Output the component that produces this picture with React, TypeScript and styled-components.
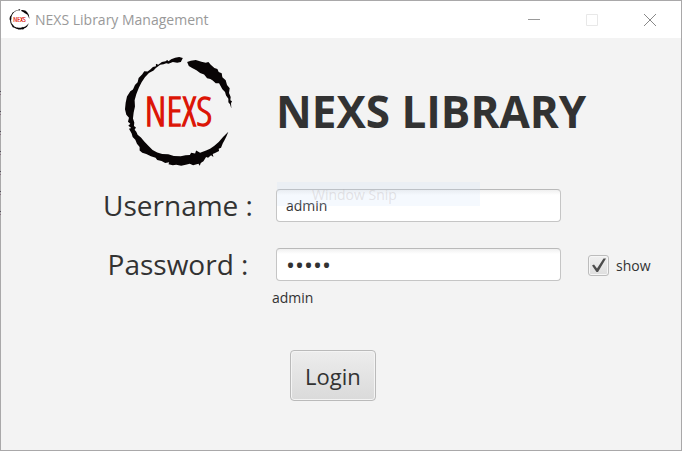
import React, { useState } from "react";
import styled, { createGlobalStyle } from "styled-components";

const GlobalStyle = createGlobalStyle`
  * { box-sizing: border-box; }
  body {
    margin: 0;
    background: #f3f3f3;
    color: #323232;
    font-family: "Open Sans", "Noto Sans", sans-serif;
  }
`;

const Window = styled.div`
  position: relative;
  display: flex;
  flex-direction: column;
  min-height: 100vh;
  border: 1px solid #a9a8a9;
  background: #f3f3f3;
`;

const DesktopEdge = styled.div`
  position: absolute;
  top: 88px;
  left: -1px;
  width: 1px;
  height: 130px;
  background: repeating-linear-gradient(
    #a9a8a9 0 2px,
    #55505c 2px 3px,
    #a9a8a9 3px 5px,
    #86717f 5px 6px,
    #a9a8a9 6px 20px
  );
`;

const TitleBar = styled.header`
  display: flex;
  align-items: center;
  height: 37px;
  padding-left: 8px;
  background: #fff;
`;

const WindowTitle = styled.span`
  flex: 1;
  margin-left: 5px;
  color: #999;
  font-size: 14px;
  line-height: 20px;
`;

const WindowButton = styled.button`
  display: flex;
  align-items: center;
  justify-content: center;
  width: 58px;
  height: 37px;
  padding: 0;
  border: 0;
  background: none;
  &:last-child { margin-right: 2px; }
`;

const Form = styled.form`
  display: grid;
  grid-template-columns: 196px minmax(0, 1fr) 90px;
  grid-template-rows: 146px 59px 102px auto;
  align-items: start;
  padding: 5px 30px 40px 79px;
`;

const LogoCell = styled.div`
  display: flex;
  justify-content: center;
  padding-top: 12px;
`;

const Heading = styled.h1`
  grid-column: 2 / 4;
  margin: 0;
  padding-top: 38px;
  font-size: 44px;
  line-height: 60px;
  font-weight: 700;
  white-space: nowrap;
`;

const FieldLabel = styled.label`
  font-size: 28px;
  line-height: 33px;
  text-align: center;
  white-space: nowrap;
`;

const FieldCell = styled.div`
  position: relative;
`;

const TextField = styled.input`
  display: block;
  width: 100%;
  height: 33px;
  padding: 0 9px;
  border: 1px solid #c5c5c5;
  border-top-color: #b9b9b9;
  border-radius: 4px;
  outline: 0;
  background: linear-gradient(#f0f0f0, #fff 5px);
  color: #323232;
  font-family: inherit;
  font-size: 14px;
  &[type="password"] {
    font-size: 24px;
  }
`;

const SnipGhost = styled.div`
  position: absolute;
  top: -7px;
  left: 1px;
  width: 203px;
  height: 24px;
  padding-left: 35px;
  background: rgba(205, 227, 250, 0.2);
  color: rgba(180, 170, 170, 0.3);
  font-size: 14px;
  line-height: 26px;
  pointer-events: none;
`;

const PlainPassword = styled.output`
  display: block;
  height: 20px;
  margin: 7px 0 0 -4px;
  font-size: 14px;
  line-height: 20px;
`;

const ShowLabel = styled.label`
  display: flex;
  align-items: center;
  height: 35px;
  gap: 7px;
  padding-left: 27px;
  font-size: 14px;
`;

const CheckFrame = styled.span`
  display: grid;
  width: 21px;
  height: 21px;
  > * { grid-area: 1 / 1; }
  svg { pointer-events: none; }
`;

const CheckInput = styled.input`
  appearance: none;
  width: 21px;
  height: 21px;
  margin: 0;
  border: 1px solid #bcbcbc;
  border-radius: 3px;
  background: linear-gradient(#f0f0f0, #dedede);
  box-shadow: inset 0 0 0 1px #f6f6f6;
`;

const LoginButton = styled.button`
  grid-column: 2;
  justify-self: start;
  height: 51px;
  margin-left: 14px;
  padding: 0 14px;
  border: 1px solid #bababa;
  border-radius: 4px;
  background: linear-gradient(#ededed, #dadada);
  box-shadow: inset 0 0 0 1px #f4f4f4;
  color: #323232;
  font-family: inherit;
  font-size: 22px;
  line-height: 30px;
`;

const FormRow = styled.div`
  display: contents;
`;

const LogoText = styled.text`
  fill: #dc1405;
  stroke: #dc1405;
  stroke-width: 4px;
  font-family: "Open Sans Condensed Light", "Open Sans Condensed", "Liberation Sans Narrow", sans-serif;
  font-weight: 300;
  font-size: 122px;
`;

function Logo({ size }: { size: number }) {
  return (
    <svg width={size} height={size} viewBox="18 22 340 340" role="img" aria-label="NEXS">
      <g fill="#080405">
        <path d="M201 31 L195 43 L184 45 L171 43 L158 48 L151 47 L143 50 L133 51 L120 61 L113 69 L99 76 L87 89 L77 104 L69 120 L61 140 L56 158 L57 177 L53 196 L51 213 L55 225 L54 236 L60 240 L56 247 L61 253 L65 262 L75 270 L85 282 L98 296 L110 308 L124 315 L139 320 L157 321 L174 326 L195 327 L209 324 L222 323 L226 316 L238 318 L241 309 L253 316 L271 309 L283 304 L296 295 L309 284 L322 269 L338 253 L332 267 L326 279 L321 288 L316 301 L309 304 L310 311 L298 317 L291 320 L293 329 L286 324 L277 331 L271 329 L263 342 L255 347 L252 355 L248 349 L232 354 L222 349 L210 352 L196 355 L181 352 L171 354 L158 351 L160 345 L148 347 L137 341 L124 338 L119 331 L105 327 L91 320 L79 316 L71 309 L71 299 L63 289 L58 277 L50 269 L47 258 L39 244 L46 242 L37 235 L43 229 L36 223 L39 211 L31 202 L27 185 L29 166 L33 147 L43 131 L51 126 L57 112 L65 104 L68 91 L79 80 L85 71 L95 72 L104 65 L111 58 L120 56 L120 48 L127 51 L138 43 L149 41 L154 37 L158 41 L166 35 L178 30 L190 28 Z" />
        <path d="M214 43 L225 39 L240 37 L257 42 L270 45 L278 43 L285 51 L296 61 L305 64 L309 73 L318 77 L320 89 L330 98 L334 112 L342 122 L340 136 L345 148 L344 158 L349 161 L346 167 L347 183 L343 170 L338 164 L338 154 L331 144 L328 133 L320 125 L310 107 L300 107 L291 99 L284 94 L274 92 L265 81 L253 76 L242 68 L229 61 L219 55 Z" />
      </g>
      <LogoText x="188" y="236" textAnchor="middle">NEXS</LogoText>
    </svg>
  );
}

export default function App() {
  const [username, setUsername] = useState("admin");
  const [password, setPassword] = useState("admin");
  const [show, setShow] = useState(true);

  return (
    <>
      <GlobalStyle />
      <Window>
        <DesktopEdge />
        <TitleBar>
          <Logo size={21} />
          <WindowTitle>NEXS Library Management</WindowTitle>
          <WindowButton type="button" aria-label="Minimize">
            <svg width="12" height="12" stroke="#999"><path d="M0 5.5H12" /></svg>
          </WindowButton>
          <WindowButton type="button" aria-label="Maximize" disabled>
            <svg width="12" height="12" fill="none" stroke="#e8e8e8"><path d="M.5 .5H11.5V11.5H.5Z" /></svg>
          </WindowButton>
          <WindowButton type="button" aria-label="Close">
            <svg width="12" height="12" stroke="#888"><path d="M0 0L12 12M12 0L0 12" /></svg>
          </WindowButton>
        </TitleBar>
        <Form onSubmit={(e: React.FormEvent) => e.preventDefault()}>
          <FormRow>
            <LogoCell><Logo size={113} /></LogoCell>
            <Heading>NEXS LIBRARY</Heading>
          </FormRow>
          <FieldLabel htmlFor="username">Username :</FieldLabel>
          <FieldCell>
            <TextField id="username" value={username} onChange={(e) => setUsername(e.target.value)} />
            <SnipGhost>Window Snip</SnipGhost>
          </FieldCell>
          <span />
          <FieldLabel htmlFor="password">Password :</FieldLabel>
          <FieldCell>
            <TextField id="password" type="password" value={password} onChange={(e) => setPassword(e.target.value)} />
            <PlainPassword htmlFor="password">{show ? password : ""}</PlainPassword>
          </FieldCell>
          <ShowLabel>
            <CheckFrame>
              <CheckInput type="checkbox" checked={show} onChange={(e) => setShow(e.target.checked)} />
              {show && (
                <svg width="21" height="21" fill="#4c4c4c">
                  <path d="M4 10.5L6 9.5L9 13.5L15.5 3.5H18L10 17H8.5Z" />
                </svg>
              )}
            </CheckFrame>
            show
          </ShowLabel>
          <LoginButton type="submit">Login</LoginButton>
        </Form>
      </Window>
    </>
  );
}
